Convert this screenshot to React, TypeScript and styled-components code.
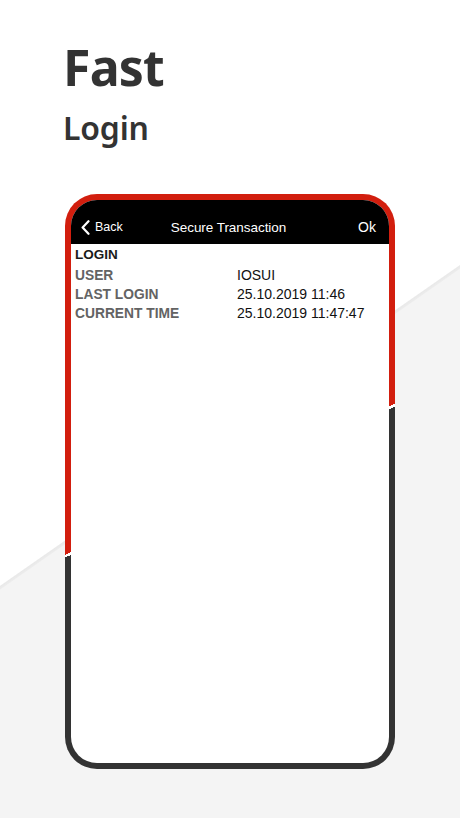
import React from "react";
import styled, { createGlobalStyle } from "styled-components";

const Global = createGlobalStyle`
  html, body { margin: 0; padding: 0; background: #ffffff; }
  #root { width: 460px; height: 818px; }
`;

const Page = styled.div`
  width: 460px;
  height: 818px;
  overflow: hidden;
  box-sizing: border-box;
  padding: 42px 0 0 0;
  display: flex;
  flex-direction: column;
  background: linear-gradient(
    145.1deg,
    #ffffff calc(50% + 13px),
    #e9e9e9 calc(50% + 14px),
    #ececec calc(50% + 16px),
    #f4f4f4 calc(50% + 17px)
  );
`;

const Titles = styled.div`
  padding-left: 63px;
  display: flex;
  flex-direction: column;
  gap: 20px;
  font-family: "Noto Sans", "Open Sans", sans-serif;
  color: #333333;
`;

const BigTitle = styled.h1`
  margin: 0;
  font-size: 50px;
  line-height: 50px;
  font-weight: 700;
  letter-spacing: -0.8px;
`;

const SubTitle = styled.h2`
  margin: 0;
  font-size: 32px;
  line-height: 32px;
  font-weight: 600;
  letter-spacing: -0.2px;
`;

const Frame = styled.div`
  margin: 50px 0 0 65px;
  width: 330px;
  height: 575px;
  box-sizing: border-box;
  padding: 6px;
  border-radius: 32px;
  background: linear-gradient(
    155.4deg,
    #d21e0e calc(50% - 2px),
    #ffffff calc(50% - 2px),
    #ffffff calc(50% + 0.5px),
    #333333 calc(50% + 0.5px)
  );
`;

const Screen = styled.div`
  width: 100%;
  height: 100%;
  background: #ffffff;
  border-radius: 26px;
  overflow: hidden;
  display: flex;
  flex-direction: column;
`;

const NavBar = styled.div`
  height: 44px;
  box-sizing: border-box;
  padding: 10px 13px 0 10px;
  background: #000000;
  display: grid;
  grid-template-columns: 1fr auto 1fr;
  align-items: center;
  color: #ffffff;
  font-family: "Liberation Sans", Arial, sans-serif;
`;

const BackButton = styled.div`
  display: flex;
  align-items: center;
  gap: 5px;
  font-size: 12.5px;
`;

const NavTitle = styled.div`
  font-size: 13.5px;
  letter-spacing: -0.05px;
`;

const NavAction = styled.div`
  justify-self: end;
  font-size: 14px;
`;

const Content = styled.div`
  padding: 1px 4px 0;
  font-family: "Liberation Sans", Arial, sans-serif;
`;

const SectionTitle = styled.div`
  font-size: 13.5px;
  line-height: 19px;
  font-weight: 700;
  color: #1a1a1a;
  margin-bottom: 2px;
`;

const Row = styled.div`
  display: grid;
  grid-template-columns: 162px 1fr;
  line-height: 19px;
`;

const Label = styled.div`
  font-size: 13.8px;
  font-weight: 700;
  color: #636363;
`;

const Value = styled.div`
  font-size: 14px;
  color: #111111;
`;

const rows = [
  { label: "USER", value: "IOSUI" },
  { label: "LAST LOGIN", value: "25.10.2019 11:46" },
  { label: "CURRENT TIME", value: "25.10.2019 11:47:47" },
];

export default function App() {
  return (
    <>
      <Global />
      <Page>
        <Titles>
          <BigTitle>Fast</BigTitle>
          <SubTitle>Login</SubTitle>
        </Titles>
        <Frame>
          <Screen>
            <NavBar>
              <BackButton>
                <svg width="9" height="15" viewBox="0 0 9 15">
                  <polyline
                    points="7.5,1.2 1.6,7.5 7.5,13.8"
                    fill="none"
                    stroke="#ffffff"
                    strokeWidth="2.2"
                    strokeLinecap="round"
                    strokeLinejoin="round"
                  />
                </svg>
                Back
              </BackButton>
              <NavTitle>Secure Transaction</NavTitle>
              <NavAction>Ok</NavAction>
            </NavBar>
            <Content>
              <SectionTitle>LOGIN</SectionTitle>
              {rows.map((r) => (
                <Row key={r.label}>
                  <Label>{r.label}</Label>
                  <Value>{r.value}</Value>
                </Row>
              ))}
            </Content>
          </Screen>
        </Frame>
      </Page>
    </>
  );
}
